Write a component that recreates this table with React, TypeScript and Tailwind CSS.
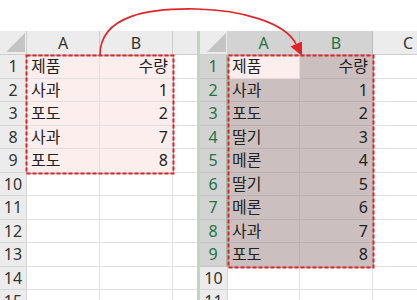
import React from "react";

const FONT = { fontFamily: '"Noto Sans", "Noto Sans CJK KR", sans-serif' };

type Row = { n: string; a?: string; b?: string };

const leftRows: Row[] = [
  { n: "1", a: "제품", b: "수량" },
  { n: "2", a: "사과", b: "1" },
  { n: "3", a: "포도", b: "2" },
  { n: "8", a: "사과", b: "7" },
  { n: "9", a: "포도", b: "8" },
  { n: "10" },
  { n: "11" },
  { n: "12" },
  { n: "13" },
  { n: "14" },
  { n: "15" },
];

const rightRows: Row[] = [
  { n: "1", a: "제품", b: "수량" },
  { n: "2", a: "사과", b: "1" },
  { n: "3", a: "포도", b: "2" },
  { n: "4", a: "딸기", b: "3" },
  { n: "5", a: "메론", b: "4" },
  { n: "6", a: "딸기", b: "5" },
  { n: "7", a: "메론", b: "6" },
  { n: "8", a: "사과", b: "7" },
  { n: "9", a: "포도", b: "8" },
  { n: "10" },
  { n: "11" },
];

function Corner({ w }: { w: string }) {
  return (
    <div className={`${w} h-full shrink-0 border-r border-b border-[#cfcfcf] bg-[#ececec] flex items-end justify-end pr-[1px] pb-[2px]`}>
      <svg width="19" height="19" viewBox="0 0 19 19">
        <polygon points="19,0 19,19 0,19" fill="#c4c4c4" />
      </svg>
    </div>
  );
}

function LeftSheet() {
  return (
    <div className="w-[197px] shrink-0 flex flex-col">
      <div className="h-[24px] flex text-[16px] text-[#333]">
        <Corner w="w-[27px]" />
        <div className="w-[73px] shrink-0 border-r border-b border-[#cfcfcf] bg-[#ececec] flex items-center justify-center">A</div>
        <div className="w-[73px] shrink-0 border-r border-b border-[#cfcfcf] bg-[#ececec] flex items-center justify-center">B</div>
        <div className="flex-1 border-b border-[#cfcfcf] bg-[#ececec]" />
      </div>
      {leftRows.map((r, i) => {
        const sel = i < 5;
        return (
          <div key={r.n} className="h-[23.5px] shrink-0 flex text-[16px] text-[#222]">
            <div className="w-[27px] shrink-0 border-r border-b border-[#d6d6d6] bg-[#ececec] text-[#333] flex items-center justify-center">{r.n}</div>
            <div className={`w-[73px] shrink-0 border-r border-b border-[#e1e1e1] flex items-center pl-[4px] ${sel ? "bg-[#fdeeee]" : "bg-white"}`}>{r.a}</div>
            <div className={`w-[73px] shrink-0 border-r border-b border-[#e1e1e1] flex items-center justify-end pr-[4px] ${sel ? "bg-[#fdeeee]" : "bg-white"}`}>{r.b}</div>
            <div className="flex-1 border-b border-[#e1e1e1] bg-white" />
          </div>
        );
      })}
    </div>
  );
}

function RightSheet() {
  return (
    <div className="flex-1 flex flex-col">
      <div className="h-[24px] flex text-[16px]">
        <Corner w="w-[28px]" />
        <div className="w-[72px] shrink-0 border-r border-b border-[#bdbdbd] bg-[#d3d3d3] text-[#217346] flex items-center justify-center">A</div>
        <div className="w-[73px] shrink-0 border-r border-b border-[#bdbdbd] bg-[#d3d3d3] text-[#217346] flex items-center justify-center">B</div>
        <div className="flex-1 border-b border-[#cfcfcf] bg-[#ececec] text-[#333] flex items-center pl-[30px]">C</div>
      </div>
      {rightRows.map((r, i) => {
        const sel = i < 9;
        const first = i === 0;
        return (
          <div key={r.n} className="h-[23.5px] shrink-0 flex text-[16px] text-[#222]">
            <div
              className={`w-[28px] shrink-0 border-b flex items-center justify-center ${
                sel
                  ? "bg-[#d3d3d3] text-[#217346] border-[#c2c2c2] border-r-2 border-r-[#9fbfa9]"
                  : "bg-[#ececec] text-[#333] border-[#d6d6d6] border-r"
              }`}
            >
              {r.n}
            </div>
            <div
              className={`w-[72px] shrink-0 border-r border-b flex items-center pl-[4px] ${
                first ? "bg-[#fdeeee] border-[#e8dada]" : sel ? "bg-[#cbbfbf] border-[#bdb1b1]" : "bg-white border-[#e1e1e1]"
              }`}
            >
              {r.a}
            </div>
            <div
              className={`w-[73px] shrink-0 border-r border-b flex items-center justify-end pr-[4px] ${
                sel ? "bg-[#cbbfbf] border-[#bdb1b1]" : "bg-white border-[#e1e1e1]"
              }`}
            >
              {r.b}
            </div>
            <div className="flex-1 border-b border-[#e1e1e1] bg-white" />
          </div>
        );
      })}
    </div>
  );
}

export default function App() {
  return (
    <div className="relative w-[417px] h-[300px] overflow-hidden bg-white" style={FONT}>
      <div className="h-[31px]" />
      <div className="flex">
        <LeftSheet />
        <div className="w-[3px] shrink-0 bg-[#c3d2c6]" />
        <RightSheet />
      </div>

      <svg className="absolute inset-0 pointer-events-none" width="417" height="300" viewBox="0 0 417 300">
        {/* copy marquees */}
        <rect x="26.5" y="55.5" width="147" height="118" fill="none" stroke="#a7b5a8" strokeWidth="1" />
        <rect x="26.5" y="55.5" width="147" height="118" fill="none" stroke="#e3232a" strokeWidth="2" strokeDasharray="4 2" />
        <rect x="228.5" y="55.5" width="145" height="212" fill="none" stroke="#a7b5a8" strokeWidth="1" />
        <rect x="228.5" y="55.5" width="145" height="212" fill="none" stroke="#e3232a" strokeWidth="2" strokeDasharray="4 2" />
        {/* arrow */}
        <path
          d="M100 55 C100 15, 150 8, 197 9 C240 10, 285 22, 296 44"
          fill="none"
          stroke="#e3232a"
          strokeWidth="1.6"
        />
        <polygon points="302,56 290.5,46.5 302,41.5" fill="#e3232a" />
      </svg>
    </div>
  );
}
